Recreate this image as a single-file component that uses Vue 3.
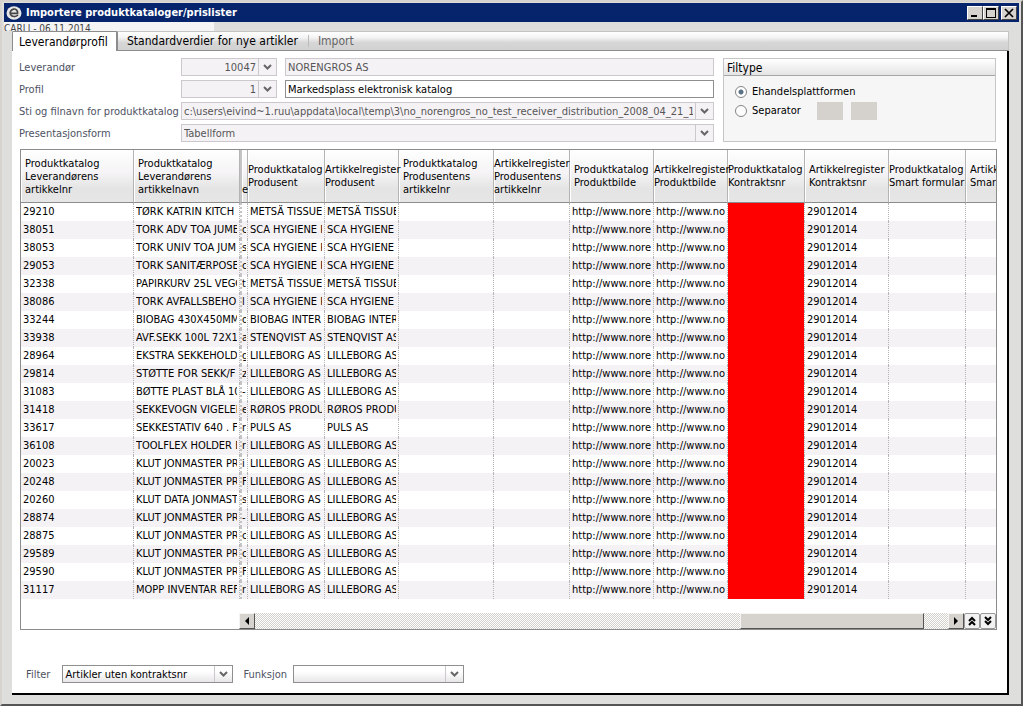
<script setup>
const headers = [
  { lines: ['Produktkatalog', 'Leverandørens', 'artikkelnr'], pad: true },
  { lines: ['Produktkatalog', 'Leverandørens', 'artikkelnavn'], pad: true },
  { lines: ['', '', 'e'], sliver: true },
  { lines: ['Produktkatalog', 'Produsent'] },
  { lines: ['Artikkelregister', 'Produsent'] },
  { lines: ['Produktkatalog', 'Produsentens', 'artikkelnr'], pad: true },
  { lines: ['Artikkelregister', 'Produsentens', 'artikkelnr'] },
  { lines: ['Produktkatalog', 'Produktbilde'], pad: true },
  { lines: ['Artikkelregister', 'Produktbilde'] },
  { lines: ['Produktkatalog', 'Kontraktsnr'] },
  { lines: ['Artikkelregister', 'Kontraktsnr'], pad: true },
  { lines: ['Produktkatalog', 'Smart formular'] },
  { lines: ['Artikk', 'Smart'], pad: true }
]

const items = [
  ['29210', 'TØRK KATRIN KITCH', '', 'METSÄ TISSUE'],
  ['38051', 'TORK ADV TOA JUMB', 'c', 'SCA HYGIENE P'],
  ['38053', 'TORK UNIV TOA JUM', 's', 'SCA HYGIENE P'],
  ['29053', 'TORK SANITÆRPOSE', 'c', 'SCA HYGIENE P'],
  ['32338', 'PAPIRKURV 25L VEGG', 't', 'METSÄ TISSUE'],
  ['38086', 'TORK AVFALLSBEHO', 'l', 'SCA HYGIENE P'],
  ['33244', 'BIOBAG 430X450MM', 'o', 'BIOBAG INTER'],
  ['33938', 'AVF.SEKK 100L 72X1', 'a', 'STENQVIST AS'],
  ['28964', 'EKSTRA SEKKEHOLDE', 'g', 'LILLEBORG AS'],
  ['29814', 'STØTTE FOR SEKK/F', 'z', 'LILLEBORG AS'],
  ['31083', 'BØTTE PLAST BLÅ 10', '-', 'LILLEBORG AS'],
  ['31418', 'SEKKEVOGN VIGELEN', 'e', 'RØROS PRODU'],
  ['33617', 'SEKKESTATIV 640 . F', 'r', 'PULS AS'],
  ['36108', 'TOOLFLEX HOLDER E', 'r', 'LILLEBORG AS'],
  ['20023', 'KLUT JONMASTER PR', 'i', 'LILLEBORG AS'],
  ['20248', 'KLUT JONMASTER PR', 'F', 'LILLEBORG AS'],
  ['20260', 'KLUT DATA JONMAST', 's', 'LILLEBORG AS'],
  ['28874', 'KLUT JONMASTER PR', '-', 'LILLEBORG AS'],
  ['28875', 'KLUT JONMASTER PR', 'c', 'LILLEBORG AS'],
  ['29589', 'KLUT JONMASTER PR', 'c', 'LILLEBORG AS'],
  ['29590', 'KLUT JONMASTER PR', 'F', 'LILLEBORG AS'],
  ['31117', 'MOPP INVENTAR REF', 'r', 'LILLEBORG AS']
]
const rows = items.map((i) => [...i, i[3], '', '', 'http://www.nore', 'http://www.no', '', '29012014', '', ''])
</script>

<template>
  <div class="window">
    <header class="titlebar">
      <svg class="logo" viewBox="0 0 16 16" aria-hidden="true">
        <ellipse cx="8" cy="8" rx="7.5" ry="6.8" fill="#e6e6e6" />
        <path d="M3.6 8.4H11.6C12 5 9.4 3.6 7.4 4.1C4.6 4.8 3.5 7.4 4.6 9.6C6 12.2 10 12 12 10" fill="none" stroke="#444" stroke-width="1.7" />
      </svg>
      <h1>Importere produktkataloger/prislister</h1>
      <div class="controls">
        <button aria-label="Minimer"><svg viewBox="0 0 12 10"><path d="M2 7h6v2H2z" /></svg></button>
        <button aria-label="Maksimer"><svg viewBox="0 0 12 10"><path d="M1 0h10v10H1zM2 2v7h8V2z" fill-rule="evenodd" /></svg></button>
        <button class="close" aria-label="Lukk"><svg viewBox="0 0 12 10"><path d="M2 1l8 8M10 1L2 9" stroke="#000" stroke-width="1.7" /></svg></button>
      </div>
    </header>
    <div class="stamp"><span>CARLI - 06.11.2014</span></div>

    <main class="sheet">
      <nav class="tabs" role="tablist">
        <button class="tab active" role="tab" aria-selected="true">Leverandørprofil</button>
        <button class="tab" role="tab">Standardverdier for nye artikler</button>
        <button class="tab muted" role="tab">Import</button>
      </nav>

      <div class="content">
        <div class="top">
          <form class="fields">
            <label for="lev">Leverandør</label>
            <div class="combo dim">
              <input id="lev" class="num" value="10047" />
              <button type="button" class="drop" aria-label="Velg leverandør"><svg viewBox="0 0 9 6"><path d="M1 1l3.5 3.5L8 1" /></svg></button>
            </div>
            <input class="box dim" value="NORENGROS AS" aria-label="Leverandørnavn" />

            <label for="prof">Profil</label>
            <div class="combo dim">
              <input id="prof" class="num" value="1" />
              <button type="button" class="drop" aria-label="Velg profil"><svg viewBox="0 0 9 6"><path d="M1 1l3.5 3.5L8 1" /></svg></button>
            </div>
            <input class="box" value="Markedsplass elektronisk katalog" aria-label="Profilnavn" />

            <label for="path">Sti og filnavn for produktkatalog</label>
            <div class="combo dim wide">
              <select id="path"><option>c:\users\eivind~1.ruu\appdata\local\temp\3\no_norengros_no_test_receiver_distribution_2008_04_21_15</option></select>
              <span class="drop"><svg viewBox="0 0 9 6"><path d="M1 1l3.5 3.5L8 1" /></svg></span>
            </div>

            <label for="pres">Presentasjonsform</label>
            <div class="combo dim wide">
              <select id="pres"><option>Tabellform</option></select>
              <span class="drop"><svg viewBox="0 0 9 6"><path d="M1 1l3.5 3.5L8 1" /></svg></span>
            </div>
          </form>

          <section class="filetype">
            <h2>Filtype</h2>
            <div class="choice"><label><input type="radio" name="ft" checked />Ehandelsplattformen</label></div>
            <div class="choice"><label><input type="radio" name="ft" />Separator</label><i class="swatch"></i><i class="swatch"></i></div>
          </section>
        </div>

        <section class="grid">
          <table>
            <colgroup><col v-for="(h, i) in headers" :key="i" :class="'c' + i" /></colgroup>
            <thead>
              <tr>
                <th v-for="(h, i) in headers" :key="i" :class="{ pad: h.pad, sliver: h.sliver }">
                  <div v-for="(l, j) in h.lines" :key="j" class="line">{{ l }}</div>
                </th>
              </tr>
            </thead>
            <tbody>
              <tr v-for="r in rows" :key="r[0]">
                <td v-for="(c, i) in r" :key="i" :class="{ red: i === 9, sliver: i === 2 }"><div class="cell">{{ c }}</div></td>
              </tr>
            </tbody>
          </table>
          <div class="scroll">
            <button class="arrow" aria-label="Rull til venstre"><svg viewBox="0 0 8 8"><path d="M6 0v8L2 4z" /></svg></button>
            <div class="track"><div class="thumb"></div></div>
            <button class="arrow" aria-label="Rull til høyre"><svg viewBox="0 0 8 8"><path d="M2 0v8l4-4z" /></svg></button>
            <button class="jump" aria-label="Til toppen"><svg viewBox="0 0 8 10"><path d="M1 5l3-3 3 3M1 9l3-3 3 3" /></svg></button>
            <button class="jump" aria-label="Til bunnen"><svg viewBox="0 0 8 10"><path d="M1 1l3 3 3-3M1 5l3 3 3-3" /></svg></button>
          </div>
        </section>

        <footer class="filters">
          <label for="filter">Filter</label>
          <div class="combo pick">
            <select id="filter"><option>Artikler uten kontraktsnr</option></select>
            <span class="drop"><svg viewBox="0 0 9 6"><path d="M1 1l3.5 3.5L8 1" /></svg></span>
          </div>
          <label for="funk">Funksjon</label>
          <div class="combo pick">
            <select id="funk"><option></option></select>
            <span class="drop"><svg viewBox="0 0 9 6"><path d="M1 1l3.5 3.5L8 1" /></svg></span>
          </div>
        </footer>
      </div>
    </main>
  </div>
</template>

<style>
body { margin: 0; }
</style>

<style scoped>
* { box-sizing: border-box; }
.window {
  min-height: 100vh;
  display: flex;
  flex-direction: column;
  padding: 1px 2px 9px 2px;
  background: #dededc;
  border: 2px solid;
  border-color: #d6d2ce #555 #555 #d6d2ce;
  font-family: "DejaVu Sans Condensed", "DejaVu Sans", Tahoma, sans-serif;
  font-size: 11px;
  color: #000;
}
button, input, select { font: inherit; color: inherit; margin: 0; padding: 0; }
.titlebar {
  display: flex;
  align-items: center;
  height: 19px;
  padding: 0 2px;
  background: #06246b;
  color: #fff;
}
.logo { width: 16px; height: 16px; margin-right: 4px; }
h1 { flex: 1; margin: 0; font-size: 11px; font-weight: bold; }
.controls { display: flex; }
.controls button {
  display: grid;
  place-items: center;
  width: 16px;
  height: 14px;
  background: #d6d3ce;
  border: 1px solid;
  border-color: #fff #444 #444 #fff;
}
.controls .close { margin-left: 2px; }
.controls svg { width: 12px; height: 10px; }
.stamp {
  width: 210px;
  height: 9px;
  overflow: hidden;
  background: #f5f5f5;
  font-size: 10px;
  line-height: 13px;
  color: #444;
}
.sheet {
  flex: 1;
  display: flex;
  flex-direction: column;
  margin: 0 10px 0 8px;
}
.tabs {
  display: flex;
  height: 20px;
  border-top: 1px solid #c4c4c4;
  border-right: 1px solid #c4c4c4;
  border-bottom: 1px solid #8c8c8c;
  background: linear-gradient(#fff, #f4f4f4 30%, #d6d6d6 60%, #d2d2d2);
}
.tab {
  height: 18px;
  padding: 0 10px 0 9px;
  border: 0;
  background: none;
  font-size: 12px;
  line-height: 18px;
  white-space: nowrap;
}
.tab.active {
  height: 20px;
  margin-top: -1px;
  width: 106px;
  padding: 0 6px;
  text-align: left;
  background: #fff;
  border: 1px solid #8c8c8c;
  border-width: 1px 2px 0 1px;
  border-radius: 2px 2px 0 0;
}
.tab.muted { color: #666; border-left: 1px solid #bbb; height: 12px; line-height: 12px; margin-top: 3px; }
.content {
  flex: 1;
  display: flex;
  flex-direction: column;
  padding: 7px 10px 10px 8px;
  background: #fff;
  border-right: 2px solid #000;
  border-bottom: 2px solid #000;
}
.top { display: flex; gap: 9px; height: 84px; padding-right: 1px; }
.fields {
  flex: 1;
  display: grid;
  grid-template-columns: 154px 96px minmax(0, 1fr);
  grid-auto-rows: 18px;
  gap: 4px 8px;
  align-items: center;
  margin-left: -1px;
}
.fields label, .filters label { color: #4e5263; white-space: nowrap; }
.box, .combo {
  height: 18px;
  border: 1px solid #8f8f8f;
  background: #fff;
  color: #000;
  min-width: 0;
}
.box { padding: 0 2px; }
.box.dim, .combo.dim { background: #f5f2f5; border-color: #cdc8cd; color: #555; }
.combo { display: grid; grid-template-columns: minmax(0, 1fr) 18px; }
.combo.wide { grid-column: 2 / 4; }
.combo input, .combo select {
  grid-area: 1 / 1;
  width: 100%;
  height: 16px;
  border: 0;
  background: none;
  appearance: none;
  padding: 0 2px;
  outline: none;
}
.combo .num { text-align: right; }
.drop {
  grid-area: 1 / 2;
  display: grid;
  place-items: center;
  height: 16px;
  border: 0;
  border-left: 1px solid #cdc8cd;
  background: none;
  pointer-events: none;
}
.drop svg { width: 9px; height: 6px; fill: none; stroke: #666; stroke-width: 2; }
.filetype { flex: 0 0 273px; border: 1px solid #c6c6c6; background: #f6f6f6; }
h2 {
  margin: 0 0 6px;
  height: 17px;
  padding-left: 3px;
  border-bottom: 1px solid #a6a6a6;
  background: linear-gradient(#fff, #e4e4e4);
  font-size: 12px;
  font-weight: normal;
  line-height: 18px;
}
.choice { display: flex; align-items: center; height: 19px; padding-left: 11px; }
.choice label { display: flex; align-items: center; gap: 5px; margin-right: 8px; }
.choice input {
  appearance: none;
  width: 12px;
  height: 12px;
  border: 1px solid #858585;
  border-radius: 50%;
  background: #fdfdfd;
}
.choice input:checked { background: radial-gradient(circle, #5b7184 2px, #fff 3px); }
.swatch { width: 26px; height: 18px; margin-left: 8px; background: #d5d2ce; }
.grid {
  margin-top: 7px;
  border: 1px solid #8c8c8c;
  overflow: hidden;
}
table { width: 100%; table-layout: fixed; border-collapse: separate; border-spacing: 0; }
.c0 { width: 113px; }
.c1 { width: 106px; }
.c2 { width: 8px; }
.c3, .c9, .c11 { width: 77px; }
.c4, .c8 { width: 74px; }
.c5 { width: 95px; }
.c6 { width: 76px; }
.c7, .c10 { width: 84px; }
th {
  height: 53px;
  padding: 0;
  vertical-align: middle;
  text-align: left;
  font-weight: normal;
  border-right: 1px solid #b4b4b4;
  border-bottom: 1px solid #8c8c8c;
  background: linear-gradient(#fff, #f5f3f5 45%, #e4e4e4 75%, #e6e6e6);
  box-shadow: inset 1px 0 #fff;
}
th.pad { padding-left: 4px; }
th.sliver { border-left: 2px solid #c4c4c4; }
th:last-child, td:last-child { border-right: 0; }
.line { height: 13px; line-height: 14px; white-space: nowrap; }
td { height: 18px; padding: 0; border-right: 1px dotted #b4b4b4; }
tbody tr:nth-child(even) { background: #f5f2f5; }
.cell { height: 18px; margin: 0 2px; line-height: 18px; overflow: hidden; white-space: nowrap; }
td.sliver { border-left: 2px dotted #c4c4c4; }
td.sliver .cell { margin: 0 1px 0 0; }
td.red { background: linear-gradient(#f00, #f00) padding-box; }
.scroll { display: flex; height: 16px; margin: 14px 0 0 218px; }
.arrow, .jump {
  display: grid;
  place-items: center;
  width: 16px;
  height: 16px;
  background: #d6d3ce;
  border: 1px solid;
  border-color: #f4f4f4 #555 #555 #f4f4f4;
}
.arrow svg { width: 8px; height: 8px; }
.jump { border: 1px solid #999; border-radius: 2px; background: #f2f2f2; }
.jump svg { width: 8px; height: 10px; fill: none; stroke: #000; stroke-width: 2; }
.track {
  flex: 1;
  display: flex;
  justify-content: flex-end;
  padding-right: 24px;
  background: repeating-conic-gradient(#d4d0cc 0 25%, #fff 0 50%) 0 0 / 2px 2px;
}
.thumb {
  flex: 0 0 184px;
  background: #d6d3ce;
  border: 1px solid;
  border-color: #f4f4f4 #555 #555 #f4f4f4;
}
.filters { display: flex; align-items: center; margin-top: auto; padding-left: 6px; }
.pick { width: 171px; margin: 0 10px 0 12px; background: linear-gradient(#fff 35%, #e8e6e8); }
.filters label + .pick:last-child { margin-left: 6px; }
</style>
